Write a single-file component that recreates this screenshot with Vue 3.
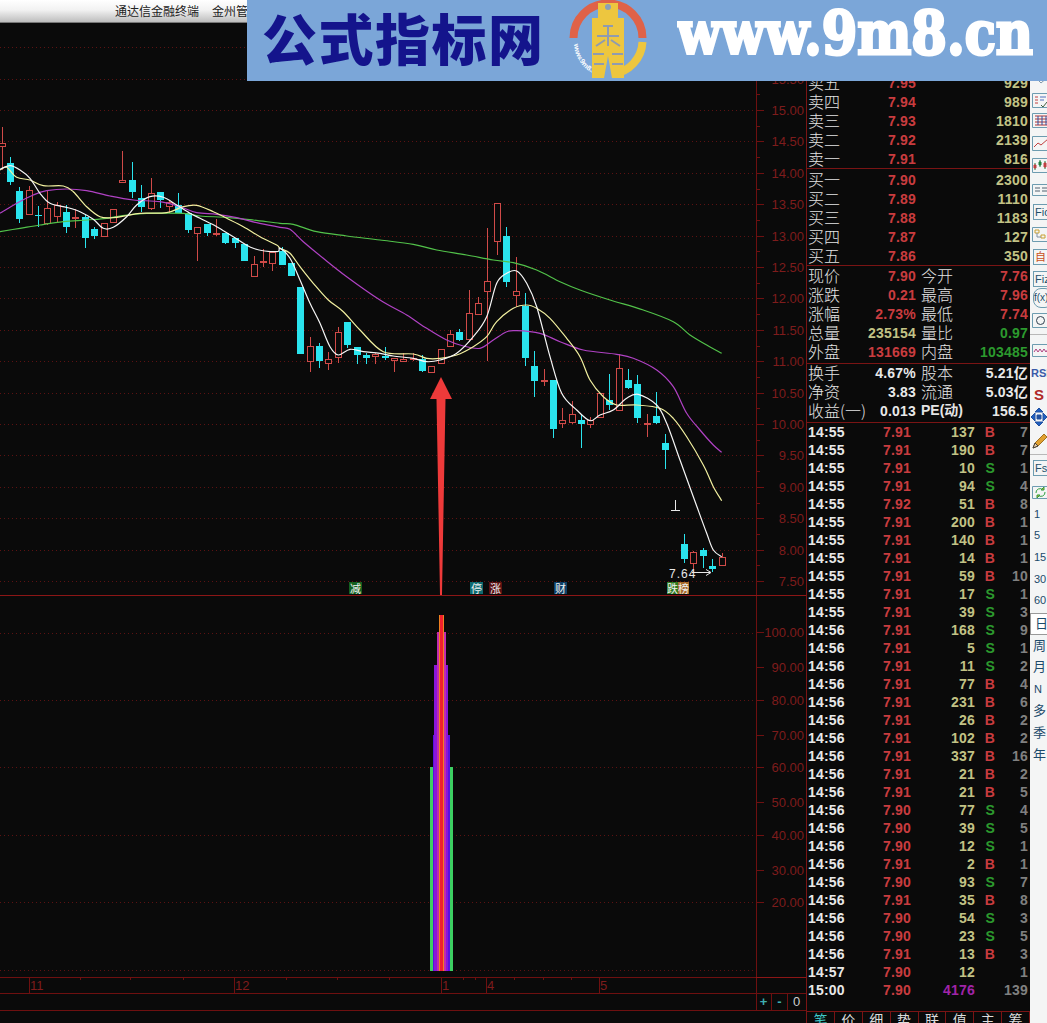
<template>
  <div class="app">
    <div class="titlebar"><span class="title">通达信金融终端</span><span class="title second">金州管理</span></div>

    <div class="main">
      <!-- K线区 -->
      <svg class="chart" width="806" height="1000" viewBox="0 23 806 1000">
        <line v-for="y in priceGrid" :key="'g' + y" x1="0" x2="756" :y1="y" :y2="y" class="dot" />
        <line v-for="y in lowerGrid" :key="'l' + y" x1="0" x2="756" :y1="y" :y2="y" class="dot" />

        <line x1="756.5" x2="756.5" y1="23" y2="1010" class="axis" />
        <line x1="0" x2="806" y1="595.5" y2="595.5" class="axis bright" />
        <line x1="0" x2="806" y1="977.5" y2="977.5" class="axis" />
        <line x1="756" x2="806" y1="977.5" y2="977.5" class="axis bright" />
        <line x1="0" x2="806" y1="993.5" y2="993.5" class="axis" />
        <line x1="0" x2="806" y1="1010.5" y2="1010.5" class="axis" />
        <line x1="771.5" x2="771.5" y1="993" y2="1010" class="axis" />
        <line x1="787.5" x2="787.5" y1="993" y2="1010" class="axis" />

        <line v-for="t in axisTicks" :key="'t' + t.y" x1="756" :x2="756 + t.len" :y1="t.y" :y2="t.y" class="axis" />
        <text v-for="p in priceLabels" :key="p.text" x="804" :y="p.y + 5" text-anchor="end" class="axis-text">{{ p.text }}</text>
        <text v-for="p in lowerLabels" :key="p.text" x="804" :y="p.y + 5" text-anchor="end" class="axis-text">{{ p.text }}</text>

        <line v-for="x in timeTicks" :key="'x' + x" :x1="x + 0.5" :x2="x + 0.5" y1="977" y2="980" class="axis" />
        <g v-for="m in months" :key="m.text">
          <line :x1="m.x + 0.5" :x2="m.x + 0.5" y1="977" y2="993" class="axis" />
          <text :x="m.x + 1" y="990" class="axis-text">{{ m.text }}</text>
        </g>
        <text x="763.5" y="1006" text-anchor="middle" class="zoom-btn">+</text>
        <text x="779.5" y="1006" text-anchor="middle" class="zoom-btn">-</text>
        <text x="796.5" y="1006" text-anchor="middle" class="zoom-btn white">0</text>

        <g v-for="c in candles" :key="c.x">
          <rect :x="c.x" :y="c.hi" width="1" :height="c.lo - c.hi" :class="c.up ? 'red-fill' : 'cyan-fill'" />
          <rect v-if="!c.up" :x="c.x - 3" :y="c.top" width="7" :height="c.bot - c.top" class="cyan-fill" />
          <rect v-else :x="c.x - 2.5" :y="c.top + 0.5" width="6" :height="Math.max(c.bot - c.top - 1, 1)" class="red-body" />
        </g>

        <path :d="greenLine" class="ma green-line" />
        <path :d="purpleLine" class="ma purple-line" />
        <path :d="yellowLine" class="ma yellow-line" />
        <path :d="whiteLine" class="ma white-line" />

        <polygon points="441,377 452,399 445.5,399 442,595 440,595 436.5,399 430,399" class="arrow" />

        <path d="M675.5 500 V510.5 M671 510.5 H680" class="mark" />
        <text x="669" y="578" class="low-text">7.64</text>
        <path d="M692 572.5 H710 M706 569.5 L711 572.5 L706 575.5" class="mark" />

        <g v-for="tag in tags" :key="tag.text + tag.x">
          <rect :x="tag.x" y="582" :width="tag.w" height="12" :fill="tag.bg" />
          <text :x="tag.x + tag.w / 2" y="592.5" text-anchor="middle" class="tag-text">{{ tag.text }}</text>
        </g>

        <!-- 下方指标柱 -->
        <rect x="430" y="767" width="3" height="204" fill="#3ccf62" />
        <rect x="450" y="767" width="3" height="204" fill="#3ccf62" />
        <rect x="433" y="735" width="17" height="236" fill="#5a10e0" />
        <rect x="434" y="665" width="14" height="306" fill="#8a16d8" />
        <rect x="437" y="632" width="9" height="339" fill="#c02ab0" />
        <rect x="439" y="615" width="5" height="356" fill="#f08020" />
        <rect x="440" y="615" width="3" height="356" fill="#f0202c" />
      </svg>

      <!-- 盘口 -->
      <div class="panel">
        <div v-for="r in sells" :key="r.label" class="book-row">
          <span class="label">{{ r.label }}</span><span class="num red">{{ r.price }}</span><span class="num khaki">{{ r.qty }}</span>
        </div>
        <div class="book-gap"></div>
        <div v-for="r in buys" :key="r.label" class="book-row">
          <span class="label">{{ r.label }}</span><span class="num red">{{ r.price }}</span><span class="num khaki">{{ r.qty }}</span>
        </div>
        <div class="book-gap thin"></div>
        <div v-for="r in quotes" :key="r.a" class="quote-row">
          <span class="label">{{ r.a }}</span><span class="num" :class="r.ac">{{ r.av }}</span>
          <span class="label second-label">{{ r.b }}</span><span class="num" :class="r.bc">{{ r.bv }}</span>
        </div>
        <div class="block-gap"></div>
        <div v-for="r in infos" :key="r.a" class="quote-row">
          <span class="label">{{ r.a }}</span><span class="num white">{{ r.av }}</span>
          <span class="label second-label" :class="{ bold: r.b.startsWith('PE') }">{{ r.b }}</span><span class="num white mixed">{{ r.bv }}</span>
        </div>
        <div class="block-gap last"></div>
        <div v-for="(t, i) in ticks" :key="i" class="tick-row">
          <span class="num white left">{{ t[0] }}</span>
          <span class="num red">{{ t[1] }}</span>
          <span class="num" :class="t[2] === '4176' ? 'violet' : 'khaki'">{{ t[2] }}</span>
          <span class="num flag" :class="t[3] === 'B' ? 'red' : 'green'">{{ t[3] }}</span>
          <span class="num gray">{{ t[4] }}</span>
        </div>
        <div class="tabs">
          <span v-for="(tab, i) in tabs" :key="tab" class="tab" :class="{ active: i === 0 }">{{ tab }}</span>
        </div>
      </div>

      <!-- 右侧工具条 -->
      <div class="toolbar">
        <div v-for="(tool, i) in tools" :key="i" class="tool" :style="{ height: tool.h + 'px' }">
          <div class="tool-box" :class="tool.cls">
            <svg v-if="tool.icon" width="20" height="20" viewBox="0 0 20 20">
              <path v-for="(p, j) in tool.icon" :key="j" :d="p[0]" :stroke="p[1]" :fill="p[2] || 'none'" />
            </svg>
            <template v-else>{{ tool.text }}</template>
          </div>
        </div>
      </div>
    </div>

    <!-- 水印横幅 -->
    <div class="banner">
      <div class="banner-title">公式指标网</div>
      <svg class="logo" width="82" height="81" viewBox="0 0 82 81">
        <path d="M6.5 38 A34 34 0 0 1 75.5 38" class="ring-red" />
        <path d="M75.5 42 A34 34 0 0 1 46 74" class="ring-yellow" />
        <path id="logo-arc" d="M7 44 A35 35 0 0 0 38 77" fill="none" />
        <text class="logo-text"><textPath href="#logo-arc">www.9m8.cn</textPath></text>
        <path d="M31 3 H51 V18 H57 V78 H45 L41 56 L37 78 H25 V18 H31 Z" class="coin" />
        <circle cx="41" cy="7" r="3" fill="#8aa0b8" />
        <path d="M36 26 H46 M30 36 H52 M41 26 V46 M29 46 L38 40 M53 46 L44 40 M26 54 H37 M45 54 H56 M27 64 H37 M45 64 H56" class="coin-line" />
      </svg>
      <svg class="site" width="362" height="81" viewBox="0 0 362 81">
        <text x="0" y="54" textLength="356" lengthAdjust="spacingAndGlyphs" class="site-text">www.9m8.cn</text>
      </svg>
    </div>
  </div>
</template>

<script setup>
const priceY = p => 110 + (15 - p) * 62.8

const priceGrid = []
const priceLabels = []
for (let p = 16; p >= 7.5; p -= 0.5) {
  const y = Math.round(priceY(p)) + 0.5
  priceGrid.push(y)
  if (p <= 15.5) priceLabels.push({ text: p.toFixed(2), y: y - 0.5 })
}

const lowerGrid = [633.5, 700.5, 767.5, 835.5, 902.5, 970.5]
const lowerLabels = [
  ['100.00', 632], ['90.00', 667], ['80.00', 700], ['70.00', 735], ['60.00', 767],
  ['50.00', 802], ['40.00', 835], ['30.00', 870], ['20.00', 902]
].map(([text, y]) => ({ text, y }))

const axisTicks = []
for (let p = 16; p >= 7.5; p -= 0.25) {
  axisTicks.push({ y: Math.round(priceY(p)) + 0.5, len: p * 2 % 1 === 0 ? 8 : 4 })
}
lowerLabels.forEach(l => axisTicks.push({ y: l.y + 0.5, len: 8 }))

const timeTicks = [80, 130, 183, 286, 337, 389, 463, 475, 514, 543, 571]
const months = [
  { text: '11', x: 29 }, { text: '12', x: 234 }, { text: '1', x: 441 }, { text: '4', x: 486 }, { text: '5', x: 599 }
]

// x, 最高, 最低, 实体上, 实体下, 阳线
const raw = [
  [2, 127, 170, 143, 147, 1], [10, 157, 185, 163, 182, 0], [19, 187, 223, 191, 219, 0], [29, 186, 215, 190, 215, 1],
  [38, 206, 227, 215, 216, 0], [47, 191, 225, 208, 224, 1], [57, 202, 222, 205, 217, 1], [66, 205, 233, 212, 227, 0],
  [75, 209, 228, 217, 219, 1], [85, 215, 248, 217, 238, 0], [94, 227, 239, 229, 236, 0], [104, 223, 237, 223, 237, 1],
  [113, 209, 223, 209, 223, 1], [122, 151, 183, 180, 183, 1], [132, 162, 198, 180, 192, 0], [141, 185, 212, 198, 207, 0],
  [151, 178, 210, 193, 209, 1], [160, 192, 208, 192, 200, 0], [169, 200, 213, 202, 207, 1], [178, 193, 213, 205, 213, 0],
  [188, 212, 233, 213, 230, 0], [197, 227, 261, 227, 234, 1], [207, 224, 236, 224, 233, 0], [216, 219, 236, 233, 235, 1],
  [225, 233, 244, 233, 243, 0], [235, 238, 248, 238, 243, 0], [244, 244, 261, 244, 261, 0], [254, 256, 277, 264, 277, 1],
  [263, 249, 267, 261, 263, 1], [272, 252, 271, 252, 264, 1], [282, 247, 265, 251, 265, 0], [291, 263, 276, 263, 276, 0],
  [300, 287, 354, 287, 354, 0], [310, 337, 372, 346, 362, 1], [319, 343, 368, 346, 361, 0], [328, 352, 370, 359, 364, 1],
  [338, 327, 363, 332, 358, 1], [347, 322, 348, 322, 345, 0], [357, 347, 364, 347, 355, 0], [366, 353, 364, 355, 358, 0],
  [375, 353, 364, 354, 357, 1], [385, 347, 360, 356, 358, 0], [394, 358, 372, 358, 361, 1], [403, 353, 362, 359, 362, 1],
  [413, 353, 361, 358, 360, 1], [422, 355, 372, 359, 371, 0], [431, 366, 373, 366, 373, 1], [441, 349, 364, 349, 364, 1],
  [450, 330, 347, 334, 347, 1], [459, 329, 341, 332, 340, 0], [469, 290, 342, 313, 340, 1], [478, 297, 315, 303, 315, 1],
  [487, 228, 361, 281, 292, 1], [497, 203, 255, 203, 242, 1], [506, 227, 287, 236, 282, 0], [516, 257, 307, 291, 296, 1],
  [525, 293, 366, 306, 358, 0], [534, 351, 397, 366, 381, 0], [544, 369, 386, 380, 382, 1], [553, 380, 438, 380, 429, 0],
  [562, 408, 428, 420, 424, 1], [572, 401, 424, 414, 423, 1], [581, 415, 448, 420, 424, 0], [590, 417, 428, 420, 425, 1],
  [600, 393, 418, 393, 418, 1], [609, 374, 410, 400, 405, 0], [619, 354, 411, 368, 411, 1], [628, 369, 389, 380, 388, 0],
  [637, 375, 423, 384, 418, 0], [647, 414, 437, 423, 425, 1], [656, 392, 424, 416, 423, 0], [665, 434, 469, 443, 450, 0],
  [684, 534, 563, 544, 559, 0], [693, 551, 572, 552, 564, 1], [703, 548, 568, 550, 556, 0], [712, 559, 572, 566, 569, 0],
  [722, 553, 566, 557, 566, 1]
]
const candles = raw.map(([x, hi, lo, top, bot, up]) => ({ x, hi, lo, top, bot, up: !!up }))

// 坐标是按放大3倍的截图读出来的，这里换算回来
const seg = (ox, oy, pts) => pts.map(([x, y]) => [x / 3 + ox, y / 3 + oy])

function smooth(pts) {
  let d = `M${pts[0][0].toFixed(1)} ${pts[0][1].toFixed(1)}`
  for (let i = 0; i < pts.length - 1; i++) {
    const p0 = pts[i - 1] || pts[i]
    const p1 = pts[i]
    const p2 = pts[i + 1]
    const p3 = pts[i + 2] || p2
    const c1x = p1[0] + (p2[0] - p0[0]) / 6
    const c1y = p1[1] + (p2[1] - p0[1]) / 6
    const c2x = p2[0] - (p3[0] - p1[0]) / 6
    const c2y = p2[1] - (p3[1] - p1[1]) / 6
    d += `C${c1x.toFixed(1)} ${c1y.toFixed(1)} ${c2x.toFixed(1)} ${c2y.toFixed(1)} ${p2[0].toFixed(1)} ${p2[1].toFixed(1)}`
  }
  return d
}

const whiteLine = smooth([
  ...seg(0, 120, [[0, 148], [30, 137], [60, 150], [90, 175], [120, 220], [150, 250], [200, 262], [240, 275], [280, 298], [310, 325], [340, 322], [380, 290], [410, 255], [450, 230], [490, 232], [530, 255], [570, 280], [600, 295], [650, 320], [700, 350], [760, 385], [830, 395]]),
  ...seg(280, 190, [[0, 175], [30, 205], [60, 270], [90, 340], [120, 400], [150, 470], [175, 495], [210, 478], [250, 485], [300, 490], [340, 498], [400, 505], [440, 515], [480, 510], [530, 490], [580, 440], [620, 380], [650, 280], [680, 250], [710, 243], [740, 280], [770, 350]]),
  ...seg(510, 290, [[120, 200], [155, 310], [200, 360], [240, 392], [270, 375], [310, 360], [350, 325], [385, 313], [440, 345], [470, 400], [510, 510], [550, 620], [590, 730], [610, 780], [635, 800]])
])
const yellowLine = smooth([
  ...seg(0, 120, [[0, 150], [20, 142], [50, 172], [90, 180], [130, 197], [190, 198], [220, 215], [260, 260], [300, 290], [340, 293], [380, 287], [420, 280], [500, 278], [550, 260], [590, 256], [640, 275], [680, 295], [730, 320], [780, 350], [830, 375]]),
  ...seg(280, 190, [[0, 175], [30, 190], [60, 230], [100, 280], [145, 330], [190, 365], [240, 420], [310, 485], [400, 492], [440, 505], [480, 505], [530, 495], [580, 470], [620, 440], [650, 395], [700, 355], [740, 345]]),
  ...seg(510, 290, [[80, 55], [120, 85], [170, 145], [210, 200], [240, 270], [280, 320], [320, 345], [380, 345], [450, 355], [490, 385], [530, 440], [580, 525], [610, 590], [635, 632]])
])
const purpleLine = smooth([
  ...seg(0, 120, [[0, 280], [50, 250], [100, 225], [140, 212], [200, 207], [260, 212], [330, 228], [400, 240], [480, 245], [540, 260], [590, 278], [650, 283], [710, 293], [770, 308]]),
  ...seg(280, 190, [[0, 112], [30, 118], [70, 155], [130, 205], [200, 260], [300, 330], [380, 375], [440, 415], [500, 450], [550, 468], [600, 475], [640, 450], [680, 425], [710, 422]]),
  ...seg(510, 290, [[90, 130], [150, 155], [220, 180], [320, 193], [370, 205], [440, 240], [490, 290], [530, 370], [570, 420], [610, 465], [635, 487]])
])
const greenLine = smooth([
  ...seg(0, 120, [[0, 335], [60, 325], [120, 315], [190, 305], [260, 300], [320, 295], [380, 285], [440, 280], [550, 280], [600, 288], [680, 292], [760, 300]]),
  ...seg(280, 190, [[0, 100], [40, 103], [110, 125], [200, 138], [300, 150], [400, 163], [470, 180], [560, 195], [640, 210], [700, 218], [770, 240], [840, 275]]),
  ...seg(510, 290, [[210, 0], [300, 30], [400, 60], [490, 95], [540, 135], [590, 165], [635, 190]])
])

const tags = [
  { text: '减', x: 349, w: 13, bg: '#14601f' },
  { text: '停', x: 470, w: 13, bg: '#0f6a70' },
  { text: '涨', x: 489, w: 13, bg: '#5a1010' },
  { text: '财', x: 554, w: 13, bg: '#0e3f66' },
  { text: '跌', x: 667, w: 11, bg: '#2c7a22' },
  { text: '榜', x: 678, w: 11, bg: '#a86a28' }
]

const sells = [
  { label: '卖五', price: '7.95', qty: '929' },
  { label: '卖四', price: '7.94', qty: '989' },
  { label: '卖三', price: '7.93', qty: '1810' },
  { label: '卖二', price: '7.92', qty: '2139' },
  { label: '卖一', price: '7.91', qty: '816' }
]
const buys = [
  { label: '买一', price: '7.90', qty: '2300' },
  { label: '买二', price: '7.89', qty: '1110' },
  { label: '买三', price: '7.88', qty: '1183' },
  { label: '买四', price: '7.87', qty: '127' },
  { label: '买五', price: '7.86', qty: '350' }
]
const quotes = [
  { a: '现价', av: '7.90', ac: 'red', b: '今开', bv: '7.76', bc: 'red' },
  { a: '涨跌', av: '0.21', ac: 'red', b: '最高', bv: '7.96', bc: 'red' },
  { a: '涨幅', av: '2.73%', ac: 'red', b: '最低', bv: '7.74', bc: 'red' },
  { a: '总量', av: '235154', ac: 'khaki', b: '量比', bv: '0.97', bc: 'green' },
  { a: '外盘', av: '131669', ac: 'red', b: '内盘', bv: '103485', bc: 'green' }
]
const infos = [
  { a: '换手', av: '4.67%', b: '股本', bv: '5.21亿' },
  { a: '净资', av: '3.83', b: '流通', bv: '5.03亿' },
  { a: '收益(一)', av: '0.013', b: 'PE(动)', bv: '156.5' }
]

const ticks = [
  ['14:55', '7.91', '137', 'B', '7'], ['14:55', '7.91', '190', 'B', '7'], ['14:55', '7.91', '10', 'S', '1'],
  ['14:55', '7.91', '94', 'S', '4'], ['14:55', '7.92', '51', 'B', '8'], ['14:55', '7.91', '200', 'B', '1'],
  ['14:55', '7.91', '140', 'B', '1'], ['14:55', '7.91', '14', 'B', '1'], ['14:55', '7.91', '59', 'B', '10'],
  ['14:55', '7.91', '17', 'S', '1'], ['14:55', '7.91', '39', 'S', '3'], ['14:56', '7.91', '168', 'S', '9'],
  ['14:56', '7.91', '5', 'S', '1'], ['14:56', '7.91', '11', 'S', '2'], ['14:56', '7.91', '77', 'B', '4'],
  ['14:56', '7.91', '231', 'B', '6'], ['14:56', '7.91', '26', 'B', '2'], ['14:56', '7.91', '102', 'B', '2'],
  ['14:56', '7.91', '337', 'B', '16'], ['14:56', '7.91', '21', 'B', '2'], ['14:56', '7.91', '21', 'B', '5'],
  ['14:56', '7.90', '77', 'S', '4'], ['14:56', '7.90', '39', 'S', '5'], ['14:56', '7.90', '12', 'S', '1'],
  ['14:56', '7.91', '2', 'B', '1'], ['14:56', '7.90', '93', 'S', '7'], ['14:56', '7.91', '35', 'B', '8'],
  ['14:56', '7.90', '54', 'S', '3'], ['14:56', '7.90', '23', 'S', '5'], ['14:56', '7.91', '13', 'B', '3'],
  ['14:57', '7.90', '12', '', '1'], ['15:00', '7.90', '4176', '', '139']
]

const tabs = ['笔', '价', '细', '势', '联', '值', '主', '筹']

const box = '#6d9cb0'
const toolDefs = [
  [78, { icon: [['M5 9 L11 15 L18 9', '#7f97a8']] }],
  [100, { icon: [['M2.5 3.5 H19 M2.5 3.5 V17.5 H19', box], ['M5 7 H8 M5 10 H8 M5 13 H8', '#c04040'], ['M10 7 H16 M10 10 H14', '#5070c0'], ['M11 15 L13 17 L17 12', '#406040']] }],
  [120, { icon: [['M2.5 3.5 H19 M2.5 3.5 V17.5 H19', box], ['M5 6 H19 M5 9 H19 M5 12 H19 M5 15 H19', '#b03030'], ['M8 6 V15 M12 6 V15 M16 6 V15', '#3050a0']] }],
  [143, { icon: [['M2.5 3.5 H19 M2.5 3.5 V17.5 H19', box], ['M4 14 L8 10 L11 12 L18 6', '#c04040']] }],
  [165, { icon: [['M2.5 3.5 H19 M2.5 3.5 V17.5 H19', box], ['M5 8 V15 M10 5 V12 M15 6 V14', '#208040'], ['M4 10 H6 V13 H4 Z', '#c04040', '#c04040'], ['M9 7 H11 V10 H9 Z', '#208040', '#208040'], ['M14 8 H16 V12 H14 Z', '#c04040', '#c04040']] }],
  [189, { icon: [['M2.5 5.5 H19 M2.5 5.5 V16.5 H19', box], ['M5 9 H10 M5 12 H10 M12 9 H18 M12 12 H18', '#506070']] }],
  [212, { text: 'Fio', cls: 'boxed' }],
  [234, { icon: [['M2.5 3.5 H19 M2.5 3.5 V17.5 H19', box], ['M5 6 H9 V9 H5 Z M11 11 H15 V14 H11 Z', '#c8a030'], ['M7 9 V13 H11', '#8090a0']] }],
  [257, { text: '自', cls: 'boxed orange' }],
  [279, { text: 'Fiz', cls: 'boxed' }],
  [298, { text: 'f(x)', cls: 'round' }],
  [320, { icon: [['M2.5 3.5 H19 M2.5 3.5 V17.5 H19', box], ['M10.5 6.5 A4 4 0 1 0 10.5 14.5 A4 4 0 1 0 10.5 6.5', '#304050']] }],
  [335, { cls: 'sep' }],
  [350, { icon: [['M2.5 4.5 H19 M2.5 4.5 V16.5 H19', box], ['M4 12 L6 9 L8 12 L10 9 L12 12 L14 9 L16 12 L18 9', '#b04080']] }],
  [373, { text: 'RSI', cls: 'rsi' }],
  [395, { text: 'S', cls: 'dollar' }],
  [417, { icon: [['M9 1 L13 5 H5 Z M9 19 L13 15 H5 Z M1 10 L5 6 V14 Z M17 10 L13 6 V14 Z', '#2050a0', '#2060c0'], ['M7 8 H11 V12 H7 Z', '#2050a0', '#2050a0']] }],
  [440, { icon: [['M3 18 L5 13 L14 4 L17 7 L8 16 Z', '#a07020', '#e0a030'], ['M3 18 L5 13 L8 16 Z', '#404040', '#f0d0a0']] }],
  [455, { cls: 'sep' }],
  [468, { text: 'Fs', cls: 'boxed' }],
  [492, { icon: [['M2.5 4.5 H19 M2.5 4.5 V16.5 H19', box], ['M6 11 A4 4 0 0 1 13 8 M15 10 A4 4 0 0 1 8 13', '#30a040'], ['M11 8 H14 V5 Z M10 13 H7 V16 Z', '#30a040', '#e0a030']] }],
  [514, { text: '1', cls: 'period' }],
  [535, { text: '5', cls: 'period' }],
  [557, { text: '15', cls: 'period' }],
  [579, { text: '30', cls: 'period' }],
  [600, { text: '60', cls: 'period' }],
  [624, { text: '日', cls: 'period cn selected' }],
  [646, { text: '周', cls: 'period cn' }],
  [667, { text: '月', cls: 'period cn' }],
  [689, { text: 'N', cls: 'period' }],
  [711, { text: '多', cls: 'period cn' }],
  [733, { text: '季', cls: 'period cn' }],
  [755, { text: '年', cls: 'period cn' }]
]
const tools = toolDefs.map(([c, def], i) => ({
  ...def,
  h: (toolDefs[i + 1] ? toolDefs[i + 1][0] : c + 22) - c
}))
</script>

<style scoped>
.app {
  position: relative;
  width: 1047px;
  height: 1023px;
  overflow: hidden;
  display: flex;
  flex-direction: column;
  background: #0a0a0a;
  font-family: "Liberation Sans", "Noto Sans CJK SC", sans-serif;
}

.titlebar {
  height: 23px;
  flex: none;
  box-sizing: border-box;
  padding-left: 115px;
  border-bottom: 1px solid #777;
  background: linear-gradient(#ffffff, #f2f2f2 45%, #bdbdbd);
  font: 12px/22px "Noto Sans CJK SC", sans-serif;
  color: #222;
  white-space: nowrap;
}

.second {
  margin-left: 13px;
}

.main {
  flex: 1;
  display: flex;
  min-height: 0;
}

.chart {
  flex: none;
  display: block;
}

.dot {
  stroke: #5c1212;
  stroke-width: 1;
  stroke-dasharray: 1 3;
}

.axis {
  stroke: #6e1010;
  stroke-width: 1;
}

.bright {
  stroke: #8c1616;
}

.axis-text {
  fill: #7e1c1c;
  font: 13px "Liberation Sans", sans-serif;
}

.zoom-btn {
  fill: #3fb0b0;
  font: bold 13px "Liberation Sans", sans-serif;
}

.zoom-btn.white {
  fill: #cfcfcf;
  font-weight: normal;
}

.cyan-fill {
  fill: #2ae4ee;
}

.red-fill {
  fill: #d04a48;
}

.red-body {
  fill: #0a0a0a;
  stroke: #d04a48;
  stroke-width: 1;
}

.ma {
  fill: none;
  stroke-width: 1.2;
}

.green-line {
  stroke: #52c24a;
}

.purple-line {
  stroke: #b042c4;
}

.yellow-line {
  stroke: #f2f0a0;
}

.white-line {
  stroke: #f6f6f6;
}

.arrow {
  fill: #ee3a3a;
}

.mark {
  fill: none;
  stroke: #e8e8e8;
  stroke-width: 1;
}

.low-text {
  fill: #e8e8e8;
  font: 12px "Liberation Sans", sans-serif;
  letter-spacing: 1px;
}

.tag-text {
  fill: #f0f0f0;
  font: 11px "Noto Sans CJK SC", sans-serif;
}

.panel {
  width: 224px;
  flex: none;
  box-sizing: border-box;
  padding: 50px 2px 0 1px;
  border-left: 1px solid #7a1414;
  display: flex;
  flex-direction: column;
  overflow: hidden;
}

.book-row,
.quote-row {
  height: 19px;
  flex: none;
  display: grid;
  align-items: center;
  line-height: 19px;
}

.book-row {
  grid-template-columns: 32px 76px 1fr;
}

.quote-row {
  grid-template-columns: 32px 76px 37px 1fr;
}

.book-gap {
  height: 2px;
  flex: none;
  box-sizing: border-box;
  border-top: 1px solid #7a1414;
  margin: 0 -2px 0 -1px;
}

.book-gap.thin {
  height: 1px;
}

.block-gap {
  height: 1px;
  flex: none;
  box-sizing: border-box;
  border-top: 1px solid #7a1414;
  margin: 2px -2px -1px -1px;
}

.block-gap.last {
  margin-bottom: 0;
}

.label {
  font: 300 16px/19px "Noto Sans CJK SC", sans-serif;
  color: #e4e4e4;
  white-space: nowrap;
}

.second-label {
  margin-left: 5px;
}

.second-label.bold {
  font: bold 14px/19px "Liberation Sans", "Noto Sans CJK SC", sans-serif;
}

.num {
  font: bold 14px/18px "Liberation Sans", "Noto Sans CJK SC", sans-serif;
  text-align: right;
  letter-spacing: 0.2px;
  white-space: nowrap;
}

.red {
  color: #c93c3f;
}

.khaki {
  color: #c2c285;
}

.green {
  color: #2c9a2e;
}

.white {
  color: #e8e8e8;
}

.gray {
  color: #808080;
}

.violet {
  color: #a024a8;
}

.tick-row {
  height: 18px;
  flex: none;
  display: grid;
  grid-template-columns: 38px 65px 64px 20px 33px;
  align-items: center;
}

.left {
  text-align: left;
}

.flag {
  text-align: right;
}

.tabs {
  margin: 12px -2px 0 -1px;
  height: 14px;
  flex: none;
  display: grid;
  grid-template-columns: repeat(8, 1fr);
  border-top: 1px solid #7a1414;
}

.tab {
  font: 14px/15px "Noto Sans CJK SC", sans-serif;
  color: #dcdcdc;
  text-align: center;
  border-right: 1px solid #7a1414;
}

.tab.active {
  color: #3fc8c8;
}

.toolbar {
  width: 17px;
  flex: none;
  box-sizing: border-box;
  padding-top: 45px;
  background: #f4f5f5;
  overflow: hidden;
}

.tool {
  display: flow-root;
}

.tool-box {
  width: 20px;
  height: 20px;
  box-sizing: border-box;
  font: 11px/20px "Liberation Sans", "Noto Sans CJK SC", sans-serif;
  color: #1f4f6a;
  white-space: nowrap;
}

.tool-box svg {
  display: block;
}

.boxed {
  margin: 2px 0 0 3px;
  height: 16px;
  line-height: 14px;
  padding-left: 1px;
  border: 1px solid #6d9cb0;
  border-right: none;
}

.orange {
  color: #c85020;
}

.round {
  margin-left: 3px;
  border: 1px solid #6d9cb0;
  border-radius: 8px;
  font-size: 10px;
  line-height: 18px;
}

.sep {
  margin-top: 9px;
  height: 1px;
  border-top: 1px solid #b8b8b8;
  width: 17px;
}

.rsi {
  padding-left: 1px;
  font-weight: bold;
  font-size: 11px;
  color: #3a5aa8;
}

.dollar {
  padding-left: 4px;
  font-weight: bold;
  font-size: 15px;
  color: #b02828;
}

.period {
  padding-left: 4px;
  font-size: 11px;
  color: #1c4a6a;
}

.cn {
  font-size: 13px;
  padding-left: 3px;
}

.selected {
  margin-top: -1px;
  height: 22px;
  padding-left: 4px;
  line-height: 20px;
  background: #fff;
  border: 1px solid #999;
}

.banner {
  position: absolute;
  left: 247px;
  top: 0;
  width: 800px;
  height: 81px;
  display: flex;
  align-items: center;
  background: #7ba6d8;
}

.banner-title {
  margin-left: 15px;
  width: 280px;
  height: 81px;
  font: 900 55px/73px "Noto Sans CJK SC", sans-serif;
  color: #14148c;
  letter-spacing: 1.5px;
  white-space: nowrap;
}

.logo {
  margin-left: 25px;
  flex: none;
}

.ring-red {
  fill: none;
  stroke: #df6248;
  stroke-width: 8;
}

.ring-yellow {
  fill: none;
  stroke: #edc63f;
  stroke-width: 8;
}

.logo-text {
  fill: #ffffff;
  font: bold 7px "Liberation Sans", sans-serif;
}

.coin {
  fill: #edc63f;
}

.coin-line {
  fill: none;
  stroke: #8f9bb0;
  stroke-width: 2;
}

.site {
  margin-left: 28px;
  flex: none;
}

.site-text {
  fill: #ffffff;
  stroke: #ffffff;
  stroke-width: 3;
  font: bold 60px "DejaVu Serif", serif;
}
</style>

<style>
body {
  background: #0a0a0a;
}
</style>
